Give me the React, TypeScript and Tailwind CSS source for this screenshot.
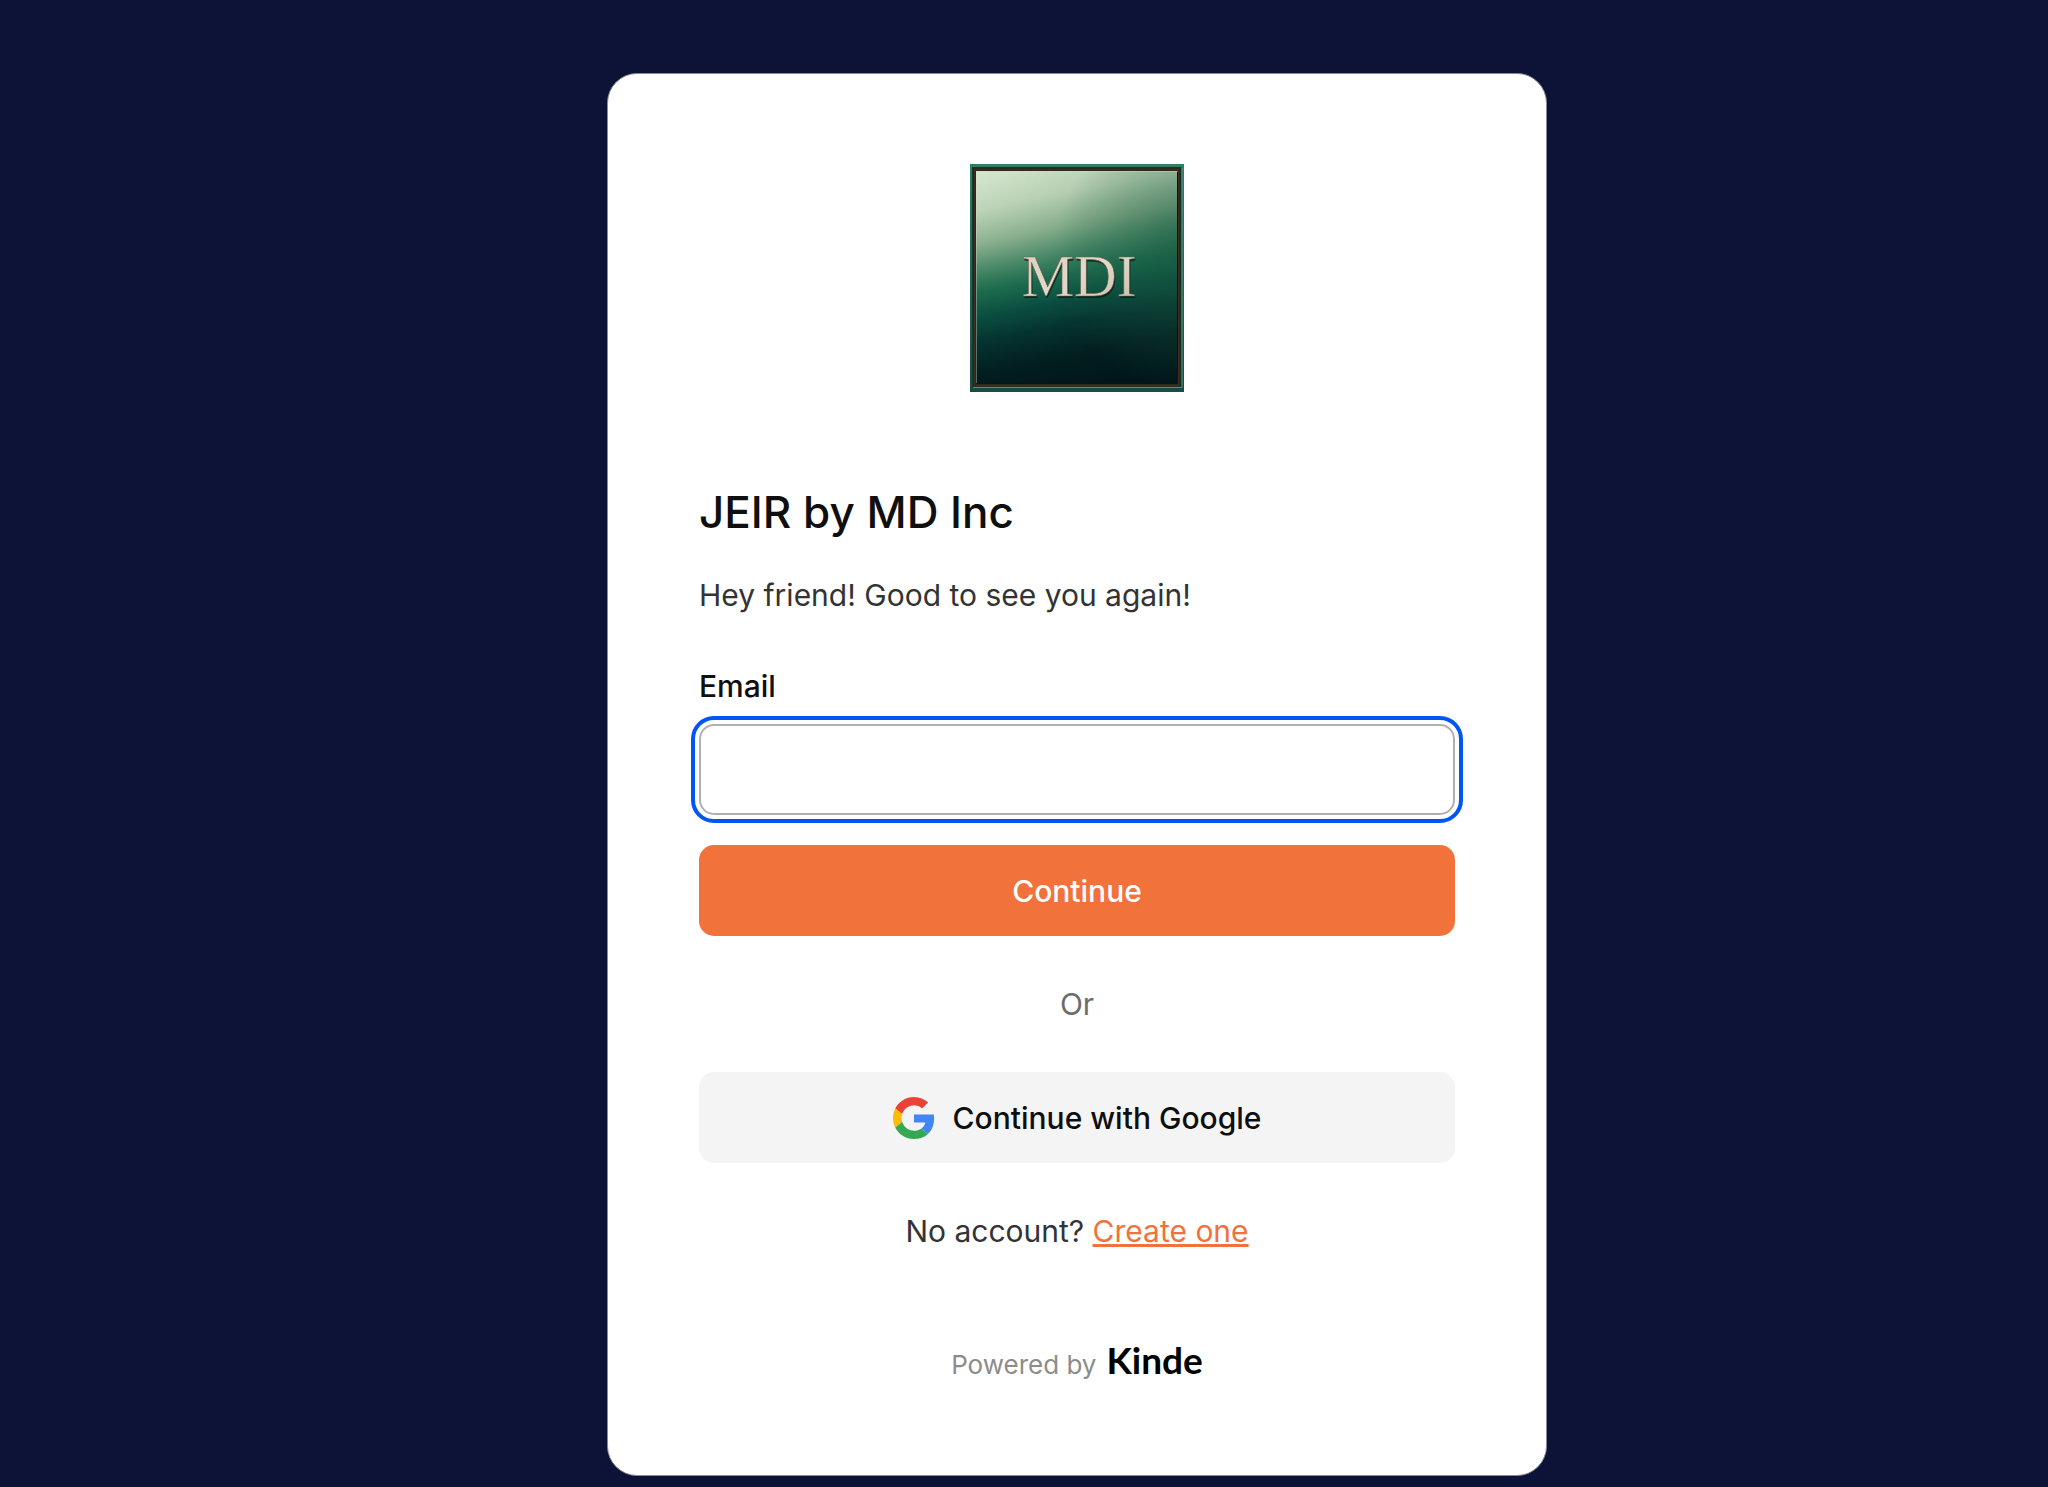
import React from "react";

function BrandLogo() {
  return (
    <svg className="h-[228px] w-[214px]" viewBox="0 0 214 228" role="img" aria-label="MDI">
      <defs>
        <linearGradient id="face" gradientUnits="userSpaceOnUse" x1="80" y1="0" x2="126" y2="224">
          <stop offset="0" stopColor="#c8dbc2" />
          <stop offset="0.14" stopColor="#b0caad" />
          <stop offset="0.28" stopColor="#80a987" />
          <stop offset="0.39" stopColor="#478766" />
          <stop offset="0.49" stopColor="#1c6a4e" />
          <stop offset="0.59" stopColor="#0b4f40" />
          <stop offset="0.7" stopColor="#053430" />
          <stop offset="0.84" stopColor="#021e1f" />
          <stop offset="1" stopColor="#01151a" />
        </linearGradient>
        <linearGradient id="shine" x1="0" y1="0" x2="0.8" y2="0.35">
          <stop offset="0" stopColor="#e2f1d8" stopOpacity="0.5" />
          <stop offset="0.7" stopColor="#cfe5c8" stopOpacity="0" />
        </linearGradient>
        <linearGradient id="shineFade" x1="0" y1="0" x2="0" y2="1">
          <stop offset="0" stopColor="#ffffff" />
          <stop offset="0.5" stopColor="#000000" />
        </linearGradient>
        <mask id="shineMask">
          <rect width="214" height="228" fill="url(#shineFade)" />
        </mask>
        <radialGradient id="shade" gradientUnits="userSpaceOnUse" cx="224" cy="90" r="140">
          <stop offset="0" stopColor="#1a5a40" stopOpacity="0.6" />
          <stop offset="1" stopColor="#1a5a40" stopOpacity="0" />
        </radialGradient>
        <linearGradient id="rim" x1="0" y1="0" x2="0" y2="1">
          <stop offset="0" stopColor="#2f7f66" />
          <stop offset="1" stopColor="#1a4a42" />
        </linearGradient>
        <linearGradient id="metal" x1="0" y1="0" x2="1" y2="1">
          <stop offset="0" stopColor="#d8cdbb" />
          <stop offset="0.5" stopColor="#e2dac8" />
          <stop offset="1" stopColor="#c9bba6" />
        </linearGradient>
      </defs>
      <rect width="214" height="228" fill="url(#rim)" />
      <rect x="2.5" y="3.5" width="208.500" height="219.500" fill="#17261f" stroke="#0d3a2f" />
      <rect x="4.500" y="5.500" width="204" height="216" fill="none" stroke="#45291c" strokeWidth="2" />
      <path d="M3 223.500H212V4" fill="none" stroke="#5b9080" strokeWidth="1" />
      <rect x="6" y="7" width="201.500" height="213" fill="url(#face)" />
      <rect x="6" y="7" width="201.500" height="213" fill="url(#shine)" mask="url(#shineMask)" />
      <rect x="6" y="7" width="201.500" height="213" fill="url(#shade)" />
      <path d="M6.500 219V7.500H207" fill="none" stroke="#cfe0d0" strokeOpacity="0.4" />
      <path d="M207.500 8V219.500H7" fill="none" stroke="#0a1513" />
      <g fontFamily="'Liberation Serif', serif" fontSize="59" textAnchor="middle">
        <text x="110" y="134" fill="#011a17" fillOpacity="0.7" aria-hidden="true">MDI</text>
        <text x="109" y="132" fill="url(#metal)" stroke="#6d5f54" strokeWidth="0.600">MDI</text>
      </g>
    </svg>
  );
}

function GoogleIcon() {
  return (
    <svg className="size-[42px]" viewBox="0 0 48 48" aria-hidden="true">
      <path fill="#EA4335" d="M24 9.500c3.540 0 6.710 1.220 9.210 3.600l6.850-6.850C35.900 2.380 30.470 0 24 0 14.620 0 6.510 5.380 2.560 13.220l7.980 6.190C12.430 13.720 17.740 9.500 24 9.500z" />
      <path fill="#4285F4" d="M46.980 24.550c0-1.570-.15-3.090-.38-4.550H24v9.020h12.940c-.58 2.960-2.260 5.480-4.780 7.180l7.730 6c4.510-4.180 7.090-10.360 7.090-17.650z" />
      <path fill="#FBBC05" d="M10.530 28.590c-.48-1.450-.76-2.990-.76-4.590s.27-3.140.76-4.590l-7.980-6.190C.92 16.460 0 20.120 0 24c0 3.880.92 7.540 2.560 10.780l7.970-6.190z" />
      <path fill="#34A853" d="M24 48c6.480 0 11.930-2.130 15.890-5.810l-7.730-6c-2.150 1.450-4.920 2.300-8.160 2.300-6.260 0-11.570-4.220-13.470-9.910l-7.980 6.190C6.510 42.620 14.620 48 24 48z" />
    </svg>
  );
}

export default function App() {
  return (
    <main className="flex min-h-screen items-start justify-center bg-[#0d1237] pt-[73px] pb-[10px] pl-[106px] font-['Inter',sans-serif] text-[30px] leading-[46px] text-[#333333]">
      <section className="flex w-full max-w-[940px] flex-col rounded-[30px] border border-[#868899] bg-white px-[91px] pt-[90px] pb-[87px]">
        <div className="flex justify-center">
          <BrandLogo />
        </div>

        <h1 className="mt-[91px] text-[44px] leading-[58px] font-medium text-[#0f0f0f]">JEIR by MD Inc</h1>
        <p className="mt-[31px]">Hey friend! Good to see you again!</p>

        <form className="mt-[45px] flex flex-col" onSubmit={(e) => e.preventDefault()}>
          <label htmlFor="email" className="font-medium text-[#0f0f0f]">
            Email
          </label>
          <input
            id="email"
            type="email"
            className="mt-[15px] h-[91px] rounded-[15px] border-2 border-[#b0b0b0] bg-white px-6 outline-4 outline-offset-4 outline-[#0056f5]"
          />
          <button type="submit" className="mt-[30px] h-[91px] rounded-[15px] bg-[#f1723b] font-medium text-white">
            Continue
          </button>
        </form>

        <p className="my-[45px] text-center text-[#6b6b6b]">Or</p>

        <button
          type="button"
          className="flex h-[91px] items-center justify-center gap-[18px] rounded-[15px] bg-[#f4f4f4] font-medium text-[#0f0f0f]"
        >
          <GoogleIcon />
          Continue with Google
        </button>

        <p className="mt-[45px] text-center">
          No account?{" "}
          <a href="#create" className="text-[#f1723b] underline">
            Create one
          </a>
        </p>

        <footer className="mt-[83px] flex items-baseline justify-center gap-[10px] text-[26px] leading-[46px] text-[#8c8c8c]">
          <span>Powered by</span>
          <a href="#kinde" className="font-['Lato',sans-serif] text-[37px] font-bold text-black">
            Kinde
          </a>
        </footer>
      </section>
    </main>
  );
}
